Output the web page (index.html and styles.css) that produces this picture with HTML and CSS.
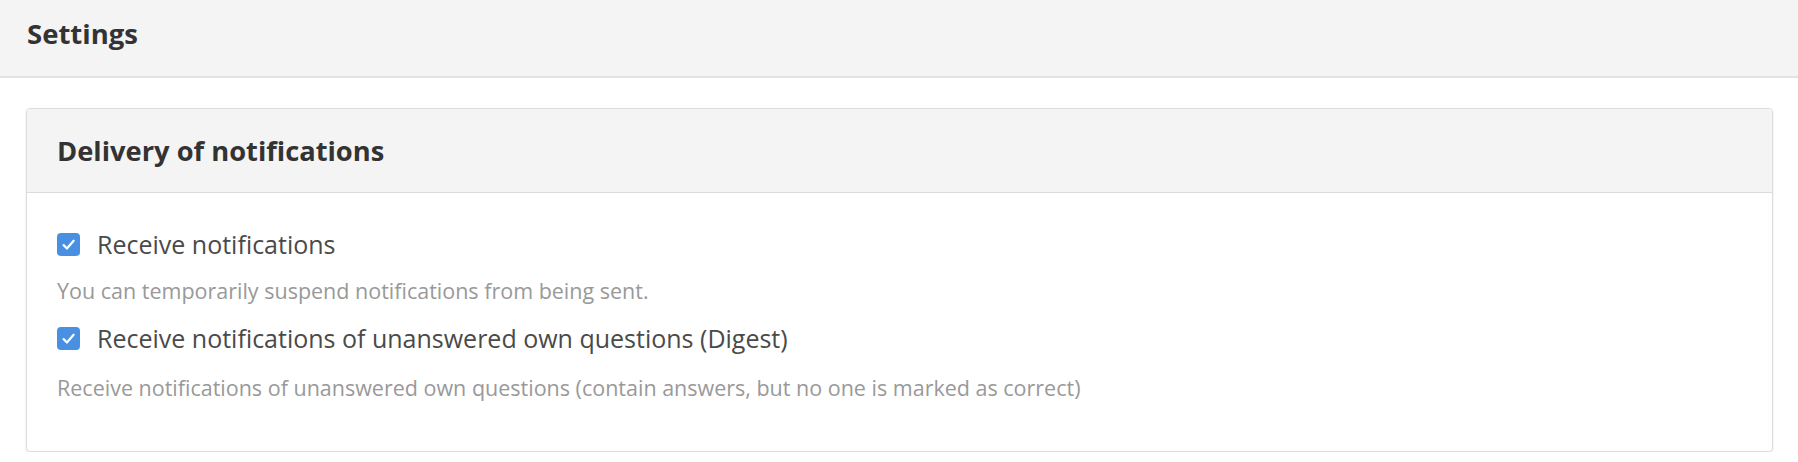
FILE: index.html
```html
<!DOCTYPE html>
<html lang="en">

<head>
    <meta name="viewport" content="width=device-width, initial-scale=1.0">
    <link rel="stylesheet" href="styles.css">
</head>

<body>

    <div class="page-header">
        <h1>Settings</h1>
    </div>

    <!-- Notification delivery panel -->
    <div class="panel">
        <div class="panel-heading">
            <h2>Delivery of notifications</h2>
        </div>
        <div class="panel-body">
            <label class="check-row">
                <span class="check-box">
                    <svg width="23" height="23" viewBox="0 0 22 22">
                        <path d="M6.3 11.6 L9.5 14.8 L15.9 7.4" fill="none" stroke="#fff" stroke-width="2.1" stroke-linecap="round" stroke-linejoin="round" />
                    </svg>
                </span>
                Receive notifications
            </label>
            <p class="help">You can temporarily suspend notifications from being sent.</p>

            <label class="check-row">
                <span class="check-box">
                    <svg width="23" height="23" viewBox="0 0 22 22">
                        <path d="M6.3 11.6 L9.5 14.8 L15.9 7.4" fill="none" stroke="#fff" stroke-width="2.1" stroke-linecap="round" stroke-linejoin="round" />
                    </svg>
                </span>
                Receive notifications of unanswered own questions (Digest)
            </label>
            <p class="help">Receive notifications of unanswered own questions (contain answers, but no one is marked as correct)</p>
        </div>
    </div>

</body>

</html>
```
FILE: styles.css
```css
* {
    box-sizing: border-box;
}

body {
    margin: 0;
    font-family: "Open Sans", "Noto Sans", sans-serif;
    background-color: #fff;
}

/* Top bar with page title */
.page-header {
    height: 78px;
    padding: 16px 27px 0;
    background-color: #f4f4f4;
    border-bottom: 2px solid #e2e2e2;
}

.page-header h1 {
    margin: 0;
    font-size: 27.5px;
    line-height: 36px;
    font-weight: 700;
    color: #333;
}

/* Panel */
.panel {
    margin: 30px 25px 0 26px;
    border: 1px solid #dcdcdc;
    border-radius: 4px;
    box-shadow: 0 1px 2px rgba(0, 0, 0, 0.12);
    overflow: hidden;
}

.panel-heading {
    padding: 24px 30px 23px;
    background-color: #f4f4f4;
    border-bottom: 1px solid #dcdcdc;
}

.panel-heading h2 {
    margin: 0;
    font-size: 27.3px;
    line-height: 36px;
    font-weight: 700;
    color: #333;
}

.panel-body {
    padding: 33px 30px 48px;
}

.check-row {
    display: flex;
    align-items: center;
    gap: 17px;
    font-size: 25px;
    line-height: 36px;
    color: #4a4a4a;
    cursor: pointer;
}

.check-box {
    display: flex;
    flex: none;
    width: 23px;
    height: 23px;
    border-radius: 4px;
    background-color: #4a90e2;
}

.help {
    margin: 14px 0 14px;
    font-size: 21.5px;
    line-height: 30px;
    color: #999;
}

.help:last-child {
    margin-bottom: 0;
    margin-top: 17px;
}
```
